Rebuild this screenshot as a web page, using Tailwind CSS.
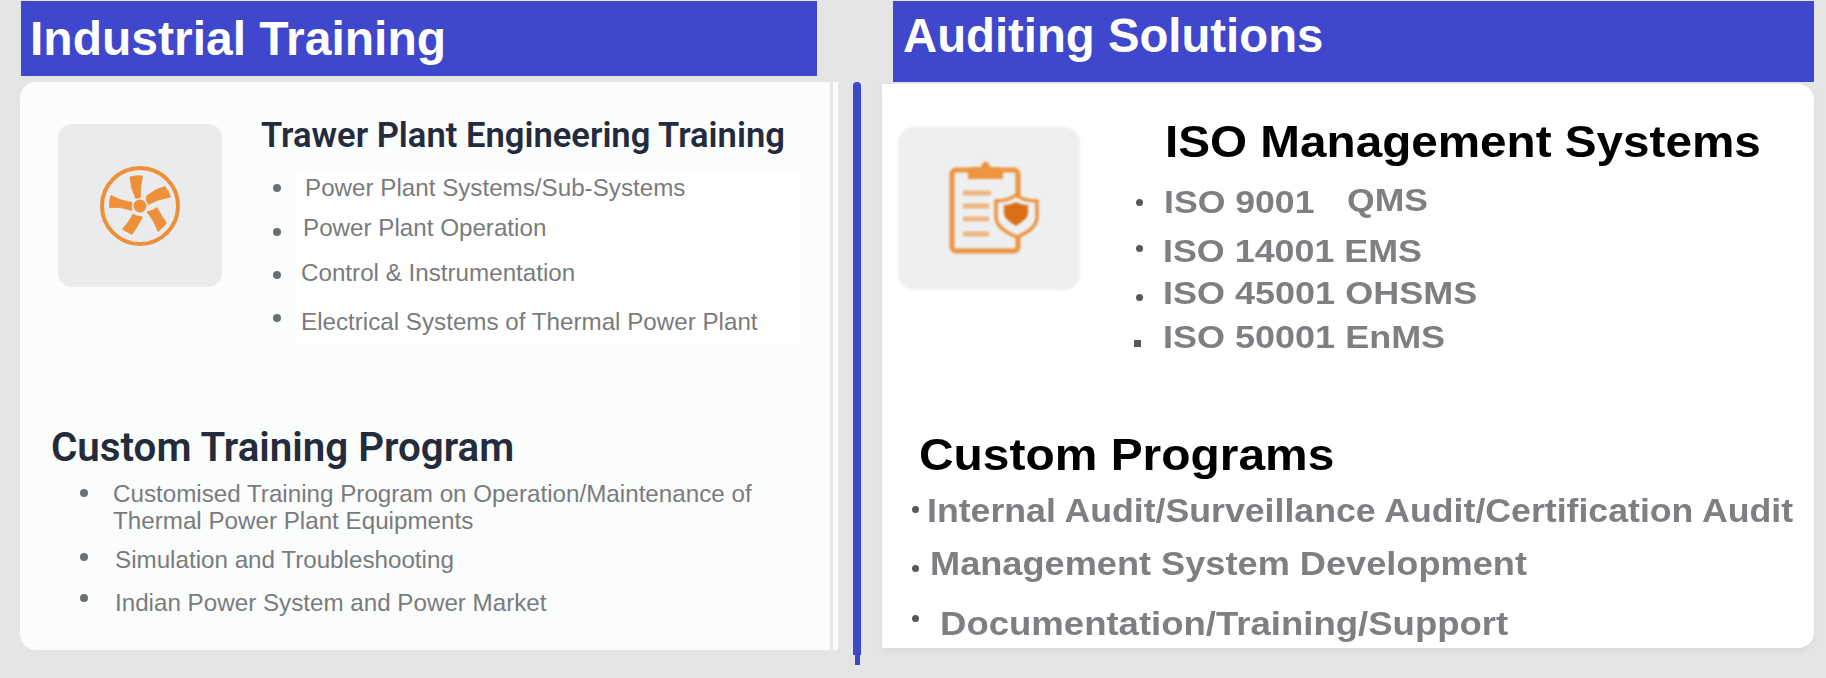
<!DOCTYPE html>
<html>
<head>
<meta charset="utf-8">
<script src="https://cdn.jsdelivr.net/npm/@tailwindcss/browser@4"></script>
</head>
<body class="m-0 bg-[#e4e6e5] font-['Liberation_Sans',Arial,sans-serif]">
<main class="flex h-[678px] w-[1826px] overflow-hidden">
  <!-- left column -->
  <section class="ml-[20px] w-[810px] flex flex-col">
    <header class="ml-[1px] mt-[1px] h-[75px] w-[796px] bg-[#3f47cc] pl-[9px] flex items-center">
      <h2 class="text-[48px] font-bold text-white leading-none">Industrial Training</h2>
    </header>
    <div class="mt-[6px] h-[568px] rounded-l-[16px] bg-[#fbfcfc]">
      <div class="flex items-start pl-[38px]">
        <div class="mt-[42px] flex h-[163px] w-[164px] items-center justify-center rounded-[14px] bg-[#e9ebec]">
          <svg width="84" height="84" viewBox="-42 -42 84 84" fill="#ee8f3a" stroke-linejoin="round">
            <circle cx="0" cy="0" r="38" fill="none" stroke="#ee8f3a" stroke-width="4"/>
            <circle cx="0" cy="0" r="6.500"/>
            <g stroke="#ee8f3a" stroke-width="0.8">
              <path d="M-10 -29Q-4 -31 2.500 -30Q0 -20 0.500 -9Q-2 -7 -4.500 -8Q-9 -17 -10 -29Z"/>
              <path d="M6 -9.500Q15 -17 25 -19.500Q29 -15 30.500 -9Q18 -7 8.500 -1.500Q6 -5 6 -9.500Z"/>
              <path d="M7 6Q12 5 17 1.500Q22 11 26.500 17Q23 22 18 25.500Q14 14 7 6Z"/>
              <path d="M-7 8Q-2 11 2.500 11Q-2 20 -8 28.500Q-13 26 -17.500 23Q-11 16 -7 8Z"/>
              <path d="M-29 -10.500Q-19 -5 -8 -3.500Q-9 1 -8 4.500Q-20 0 -30.500 1.500Q-31 -5 -29 -10.500Z"/>
            </g>
          </svg>
        </div>
        <div class="ml-[39px] mt-[33px] w-[540px]">
          <h3 class="h-[40px] text-[34.6px] font-semibold leading-[40px] text-[#232b3d] font-['Roboto',sans-serif] whitespace-nowrap">Trawer Plant Engineering Training</h3>
          <div class="mt-[17px] ml-[35px] w-[504px] h-[173px] bg-white"></div>
          <ul class="-mt-[171px] ml-[12px] text-[24.2px] leading-[28px] text-[#7a7b7d]">
            <li class="flex h-[28px] items-center"><span class="size-[8px] rounded-full bg-[#6b6f73]"></span><span class="ml-[24px] whitespace-nowrap">Power Plant Systems/Sub-Systems</span></li>
            <li class="mt-[12px] flex h-[28px] items-center"><span class="mt-[8px] size-[8px] rounded-full bg-[#6b6f73]"></span><span class="ml-[22px] whitespace-nowrap">Power Plant Operation</span></li>
            <li class="mt-[17px] flex h-[28px] items-center"><span class="mt-[4px] size-[8px] rounded-full bg-[#6b6f73]"></span><span class="ml-[20px] whitespace-nowrap">Control &amp; Instrumentation</span></li>
            <li class="mt-[21px] flex h-[28px] items-center"><span class="-mt-[8px] size-[8px] rounded-full bg-[#6b6f73]"></span><span class="ml-[20px] whitespace-nowrap">Electrical Systems of Thermal Power Plant</span></li>
          </ul>
        </div>
      </div>
      <h3 class="ml-[31px] mt-[88px] h-[48px] text-[40.3px] font-semibold leading-[48px] text-[#232b3d] font-['Roboto',sans-serif] whitespace-nowrap">Custom Training Program</h3>
      <ul class="ml-[60px] mt-[8px] text-[24.2px] leading-[27px] text-[#7a7b7d]">
        <li class="flex items-start"><span class="mt-[9px] size-[8px] rounded-full bg-[#6b6f73]"></span><span class="ml-[25px] whitespace-nowrap">Customised Training Program on Operation/Maintenance of<br>Thermal Power Plant Equipments</span></li>
        <li class="mt-[11px] flex h-[28px] items-center"><span class="-mt-[4px] size-[8px] rounded-full bg-[#6b6f73]"></span><span class="ml-[27px] whitespace-nowrap">Simulation and Troubleshooting</span></li>
        <li class="mt-[15px] flex h-[28px] items-center"><span class="-mt-[8px] size-[8px] rounded-full bg-[#6b6f73]"></span><span class="ml-[27px] whitespace-nowrap">Indian Power System and Power Market</span></li>
      </ul>
    </div>
  </section>
  <!-- divider -->
  <div class="ml-[3px] mt-[82px] h-[568px] w-[5px] bg-[#fbfcfc]"></div>
  <div class="ml-[15px] mt-[82px] flex w-[8px] flex-col items-center">
    <div class="h-[573px] w-[8px] rounded-t-full bg-[#3f47cc]"></div>
    <div class="h-[10px] w-[5px] bg-[#3f47cc]"></div>
  </div>
  <!-- right column -->
  <section class="ml-[21px] w-[932px] flex flex-col">
    <header class="ml-[11px] mt-[1px] h-[81px] w-[921px] bg-[#3f47cc] pl-[10px] flex items-center pb-[12px]">
      <h2 class="text-[47.3px] font-bold text-white leading-none">Auditing Solutions</h2>
    </header>
    <div class="mt-[2px] h-[564px] rounded-r-[16px] bg-white shadow-[0_3px_6px_rgba(0,0,0,0.05)]">
      <div class="flex items-start pl-[16px]">
        <div class="mt-[43px] flex h-[163px] w-[182px] items-center justify-center rounded-[16px] bg-[#edeff0] blur-[1px]">
          <svg width="100" height="100" viewBox="0 0 100 100" fill="none">
            <rect x="13" y="11" width="66" height="81" rx="4" stroke="#ee9440" stroke-width="5"/>
            <path d="M29 20V12C29 10 31 8 35 8H42C43 1 50 1 51 8H58C62 8 64 10 64 12V20Z" fill="#ee9440"/>
            <path d="M24 34H52M24 47H50M24 60H50M24 75H50" stroke="#efb57f" stroke-width="5"/>
            <path d="M57 42C66 42 72 40 77 36C82 40 90 42 98 42V58C98 68 88 74 78 78C68 74 57 68 57 58Z" fill="#edeff0" stroke="#ee9440" stroke-width="3.500"/>
            <path d="M65 46C72 46 75 44 77 43C79 44 83 46 89 46V54C89 60 82 63 77 67C72 63 65 60 65 54Z" fill="#d96f17"/>
          </svg>
        </div>
        <div class="ml-[56px] mt-[36px]">
          <h3 class="ml-[29px] h-[44px] origin-left scale-x-[1.083] text-[44px] font-bold leading-[44px] text-black whitespace-nowrap">ISO Management Systems</h3>
          <ul class="mt-[22px] text-[32px] font-bold leading-[32px] text-[#7f7f83] blur-[0.3px]">
            <li class="flex h-[32px] items-center"><span class="size-[7px] rounded-full bg-[#55585c]"></span><span class="ml-[21px] origin-left scale-x-[1.113] whitespace-nowrap">ISO 9001</span><span class="ml-[48px] mb-[4px] origin-left scale-x-[1.11] whitespace-nowrap">QMS</span></li>
            <li class="mt-[17px] flex h-[32px] items-center"><span class="-mt-[6px] size-[7px] rounded-full bg-[#55585c]"></span><span class="ml-[20px] origin-left scale-x-[1.12] whitespace-nowrap">ISO 14001 EMS</span></li>
            <li class="mt-[10px] flex h-[32px] items-center"><span class="mt-[8px] size-[7px] rounded-full bg-[#55585c]"></span><span class="ml-[20px] origin-left scale-x-[1.125] whitespace-nowrap">ISO 45001 OHSMS</span></li>
            <li class="mt-[12px] flex h-[32px] items-center"><span class="mt-[12px] -ml-[2px] size-[7px] bg-[#55585c]"></span><span class="ml-[22px] origin-left scale-x-[1.125] whitespace-nowrap">ISO 50001 EnMS</span></li>
          </ul>
        </div>
      </div>
      <h3 class="ml-[37px] mt-[80px] h-[44px] origin-left scale-x-[1.089] text-[44px] font-bold leading-[44px] text-black whitespace-nowrap">Custom Programs</h3>
      <ul class="ml-[30px] mt-[16px] text-[33px] font-bold leading-[36px] text-[#7f7f83] blur-[0.3px]">
        <li class="flex h-[36px] items-center"><span class="-mt-[4px] size-[7px] rounded-full bg-[#55585c]"></span><span class="ml-[8px] origin-left scale-x-[1.081] whitespace-nowrap">Internal Audit/Surveillance Audit/Certification Audit</span></li>
        <li class="mt-[17px] flex h-[36px] items-center"><span class="mt-[8px] size-[7px] rounded-full bg-[#55585c]"></span><span class="ml-[11px] origin-left scale-x-[1.096] whitespace-nowrap">Management System Development</span></li>
        <li class="mt-[24px] flex h-[36px] items-center"><span class="-mt-[12px] size-[7px] rounded-full bg-[#55585c]"></span><span class="ml-[21px] origin-left scale-x-[1.107] whitespace-nowrap">Documentation/Training/Support</span></li>
      </ul>
    </div>
  </section>
</main>
</body>
</html>
